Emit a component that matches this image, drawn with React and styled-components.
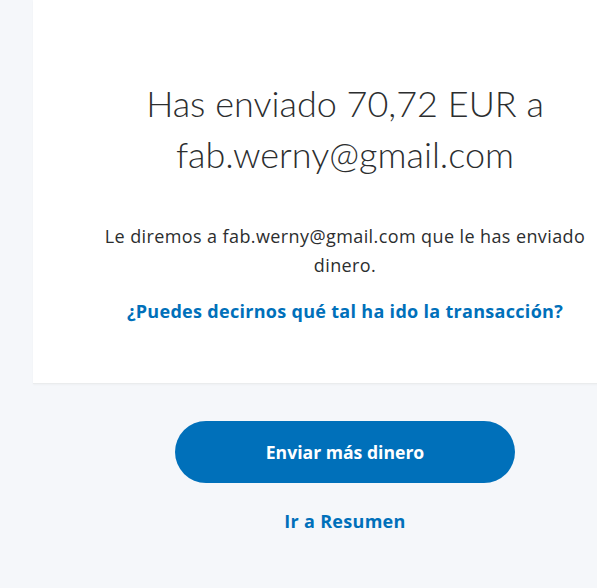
import styled, { createGlobalStyle } from "styled-components";

const GlobalStyle = createGlobalStyle`
  html, body {
    margin: 0;
    padding: 0;
    background: #f5f7fa;
    overflow: hidden;
  }
  body {
    font-family: "Open Sans", Lato, sans-serif;
    color: #2c2e2f;
  }
`;

const Page = styled.div`
  width: 690px;
  height: 588px;
  background: #f5f7fa;
  display: flex;
  flex-direction: column;
  align-items: center;
`;

const Card = styled.div`
  width: 624px;
  box-sizing: border-box;
  background: #ffffff;
  border-bottom: 1px solid #eaeced;
  box-shadow: 0 1px 2px rgba(0, 0, 0, 0.03);
  padding: 78px 20px 60px;
  display: flex;
  flex-direction: column;
  align-items: center;
  text-align: center;
`;

const Title = styled.h1`
  margin: 0;
  font-family: Lato, "Open Sans", sans-serif;
  font-size: 36px;
  font-weight: 300;
  line-height: 51px;
  color: #2c2e2f;
`;

const Message = styled.p`
  margin: 42px 0 0;
  font-size: 18px;
  letter-spacing: 0.4px;
  line-height: 29px;
  font-weight: 400;
  color: #2c2e2f;
  white-space: nowrap;
`;

const Link = styled.a`
  display: block;
  margin-top: ${(p) => p.$top || 0}px;
  font-size: ${(p) => p.$size || 18}px;
  letter-spacing: ${(p) => p.$spacing || 0}px;
  font-weight: 700;
  color: #0070ba;
  text-decoration: none;
  cursor: pointer;
`;

const Actions = styled.div`
  margin-top: 37px;
  display: flex;
  flex-direction: column;
  align-items: center;
`;

const Button = styled.button`
  width: 340px;
  height: 62px;
  border: none;
  border-radius: 31px;
  background: #0070ba;
  color: #ffffff;
  font-family: "Open Sans", Lato, sans-serif;
  font-size: 17.6px;
  font-weight: 700;
  cursor: pointer;
`;

const App = () => {
  return (
    <>
      <GlobalStyle />
      <Page>
        <Card>
          <Title>
            Has enviado 70,72 EUR a
            <br />
            fab.werny@gmail.com
          </Title>
          <Message>
            Le diremos a fab.werny@gmail.com que le has enviado
            <br />
            dinero.
          </Message>
          <Link $top={19} $size={18} $spacing={0.3}>
            ¿Puedes decirnos qué tal ha ido la transacción?
          </Link>
        </Card>
        <Actions>
          <Button>Enviar más dinero</Button>
          <Link $top={26} $size={18} $spacing={0.3}>Ir a Resumen</Link>
        </Actions>
      </Page>
    </>
  );
};

export default App;
